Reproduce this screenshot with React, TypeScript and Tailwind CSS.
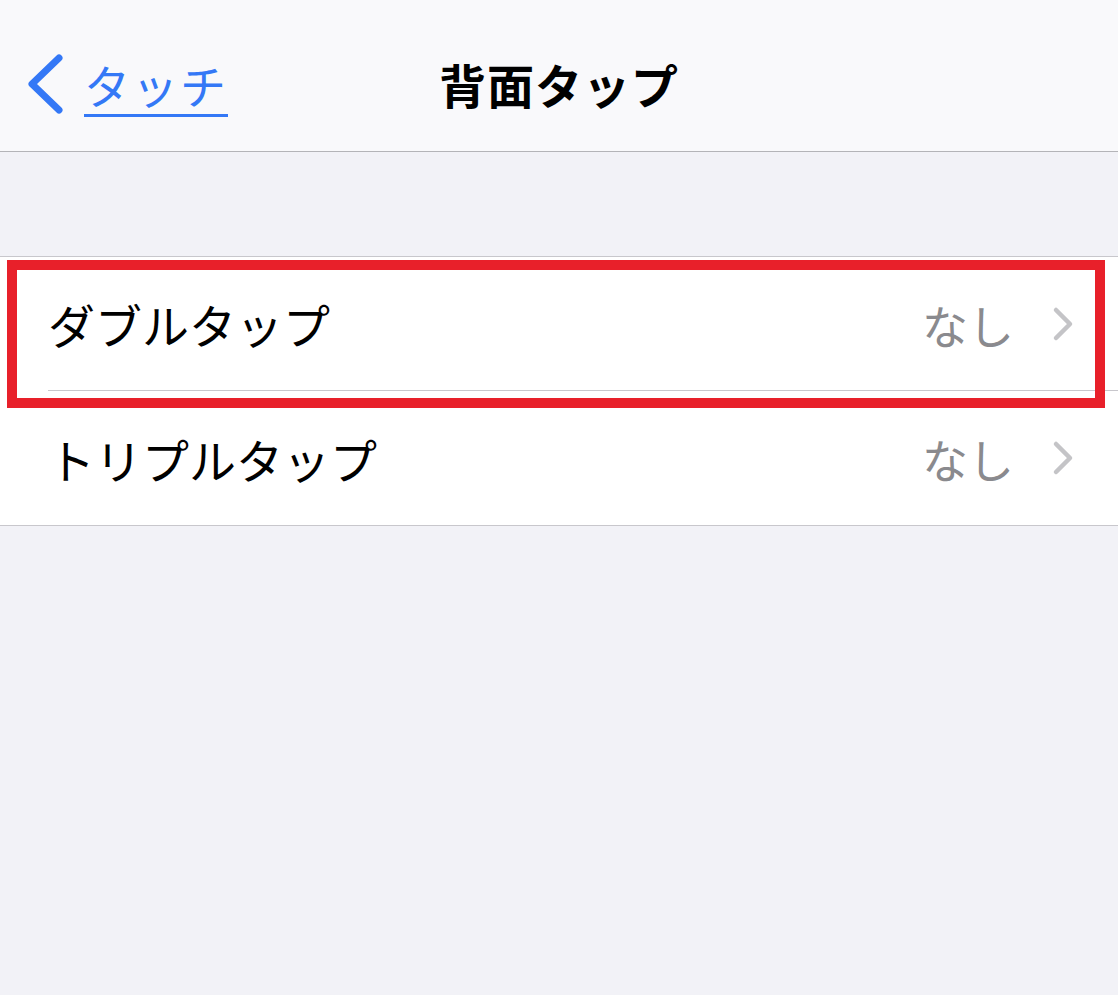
import React from 'react';

const jp = { fontFamily: '"Noto Sans CJK JP", "Noto Sans", sans-serif' };

function Chevron() {
  return (
    <svg width="22" height="36" viewBox="0 0 22 36" className="shrink-0">
      <polyline
        points="4,4 18,18 4,32"
        fill="none"
        stroke="#c4c4c7"
        strokeWidth="4.5"
        strokeLinecap="round"
        strokeLinejoin="round"
      />
    </svg>
  );
}

function Row({ label, value, divider }: { label: string; value: string; divider?: boolean }) {
  return (
    <div className="bg-white pl-[48px]">
      <div
        className={`flex items-center h-[134px] pr-[44px] ${divider ? 'border-b border-[#c8c7cc]' : ''}`}
      >
        <span className="text-[47px] leading-none text-black">{label}</span>
        <span className="ml-auto text-[46px] leading-none text-[#8a8a8e] mr-[38px]">{value}</span>
        <Chevron />
      </div>
    </div>
  );
}

export default function App() {
  return (
    <div className="min-h-[995px] bg-[#f2f2f7]" style={jp}>
      {/* Nav bar */}
      <div className="relative h-[152px] bg-[#f9f9fb] border-b border-[#b4b4b8] flex items-center pt-[16px]">
        <div className="flex items-center pl-[26px] text-[#3478f6]">
          <svg width="38" height="60" viewBox="0 0 38 60">
            <polyline
              points="33,4 6,30 33,56"
              fill="none"
              stroke="#3478f6"
              strokeWidth="7"
              strokeLinecap="round"
              strokeLinejoin="round"
            />
          </svg>
          <span className="ml-[20px] text-[46px] leading-none underline decoration-[3px] underline-offset-[10px] tracking-[2px]">
            タッチ
          </span>
        </div>
        <div className="absolute inset-0 pt-[16px] flex items-center justify-center pointer-events-none">
          <span className="text-[47px] font-bold leading-none text-black tracking-[1px]">背面タップ</span>
        </div>
      </div>

      {/* spacer */}
      <div className="h-[104px]" />

      {/* list */}
      <div className="relative border-t border-b border-[#c8c7cc]">
        <Row label="ダブルタップ" value="なし" divider />
        <Row label="トリプルタップ" value="なし" />
        <div className="absolute left-[7px] top-[3px] w-[1098px] h-[148px] border-[10px] border-[#e8202a] pointer-events-none" />
      </div>
    </div>
  );
}
